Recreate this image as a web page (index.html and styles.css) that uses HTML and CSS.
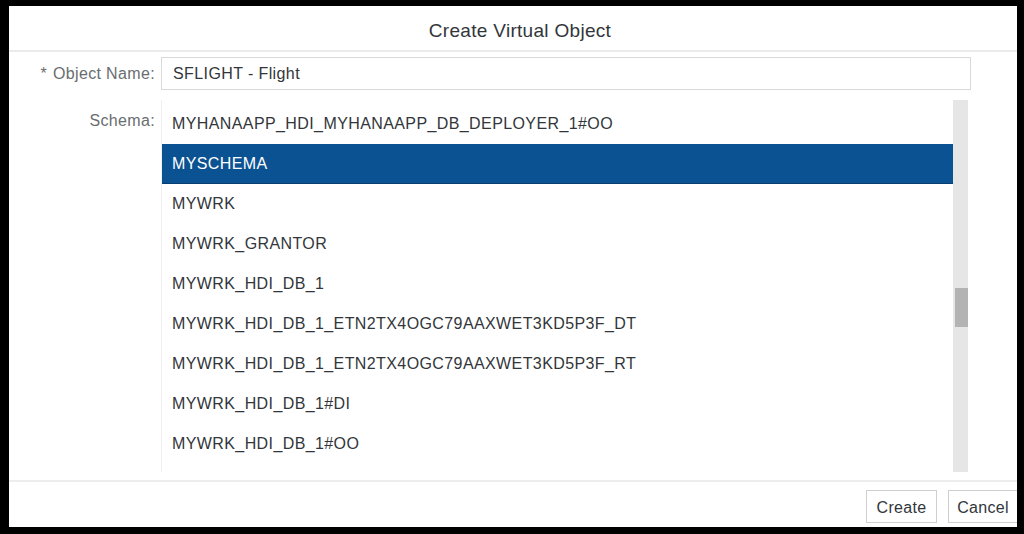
FILE: index.html
```html
<!DOCTYPE html>
<html lang="en">
<head>
    <meta charset="UTF-8">
    <meta name="viewport" content="width=device-width, initial-scale=1.0">
    <title>Create Virtual Object</title>
    <link rel="stylesheet" href="styles.css">
</head>
<body>
    <div class="dialog">
        <div class="dialog-header">Create Virtual Object</div>

        <div class="dialog-content">
            <div class="form-row">
                <label class="form-label"><span class="required">*</span>Object Name:</label>
                <div class="input-box">SFLIGHT - Flight</div>
            </div>

            <div class="form-row schema-row">
                <label class="form-label schema-label">Schema:</label>
                <div class="schema-list">
                    <ul class="items">
                        <li>MYHANAAPP_HDI_MYHANAAPP_DB_DEPLOYER_1#OO</li>
                        <li class="selected">MYSCHEMA</li>
                        <li>MYWRK</li>
                        <li>MYWRK_GRANTOR</li>
                        <li>MYWRK_HDI_DB_1</li>
                        <li>MYWRK_HDI_DB_1_ETN2TX4OGC79AAXWET3KD5P3F_DT</li>
                        <li>MYWRK_HDI_DB_1_ETN2TX4OGC79AAXWET3KD5P3F_RT</li>
                        <li>MYWRK_HDI_DB_1#DI</li>
                        <li>MYWRK_HDI_DB_1#OO</li>
                    </ul>
                    <div class="scrollbar">
                        <div class="thumb"></div>
                    </div>
                </div>
            </div>
        </div>

        <div class="dialog-footer">
            <button class="btn btn-create">Create</button>
            <button class="btn btn-cancel">Cancel</button>
        </div>
    </div>
</body>
</html>
```

FILE: styles.css
```css
body {
    margin: 0;
    height: 534px;
    padding: 6px 7px 7px 9px;
    box-sizing: border-box;
    background-color: #000;
    font-family: "Liberation Sans", Arial, sans-serif;
    color: #32363a;
    overflow: hidden;
}
.dialog {
    height: 100%;
    display: flex;
    flex-direction: column;
    background-color: #fff;
    overflow: hidden;
}
.dialog-header {
    height: 46px;
    padding: 5px 0 0 14px;
    box-sizing: border-box;
    border-bottom: 2px solid #ebebeb;
    display: flex;
    align-items: center;
    justify-content: center;
    font-size: 19px;
    letter-spacing: 0.3px;
    color: #32363a;
}
.dialog-content {
    flex: 1;
    padding: 5px 0 8px;
    box-sizing: border-box;
}
.form-row {
    display: grid;
    grid-template-columns: 146px 810px;
    column-gap: 6px;
    align-items: center;
}
.schema-row {
    margin-top: 10px;
    align-items: start;
}
.form-label {
    text-align: right;
    font-size: 16px;
    letter-spacing: 0.35px;
    color: #6a6d70;
}
.required {
    margin-right: 6px;
}
.schema-label {
    padding-top: 12px;
}
.input-box {
    height: 33px;
    box-sizing: border-box;
    border: 1px solid #d9d9d9;
    padding: 0 11px;
    line-height: 32px;
    font-size: 16px;
    letter-spacing: 0.4px;
    color: #32363a;
}
.schema-list {
    width: 807px;
    height: 372px;
    display: flex;
    border-left: 1px solid #f0f0f0;
    box-sizing: border-box;
}
.items {
    flex: 1;
    list-style: none;
    margin: 0;
    padding: 4px 0 0;
    overflow: hidden;
}
.items li {
    height: 40px;
    line-height: 40px;
    padding-left: 10px;
    font-size: 16px;
    letter-spacing: 0.4px;
    color: #32363a;
    white-space: nowrap;
}
.items li.selected {
    background-color: #0b5292;
    border-bottom: 1px solid #083f72;
    box-sizing: border-box;
    line-height: 39px;
    color: #fff;
}
.scrollbar {
    width: 15px;
    background-color: #e6e6e6;
    display: flex;
    flex-direction: column;
}
.thumb {
    margin-top: 188px;
    height: 39px;
    margin-left: 2px;
    background-color: #b3b3b3;
}
.dialog-footer {
    height: 47px;
    box-sizing: border-box;
    border-top: 2px solid #ededed;
    padding-top: 8px;
    display: flex;
    justify-content: flex-end;
    gap: 11px;
}
.btn {
    height: 33px;
    border: 1px solid #cfcfcf;
    background-color: #fff;
    font-family: inherit;
    font-size: 16px;
    letter-spacing: 0.3px;
    color: #32363a;
    padding: 2px 0 0;
}
.btn-create {
    width: 71px;
}
.btn-cancel {
    width: 69px;
    border-right: none;
}
```
